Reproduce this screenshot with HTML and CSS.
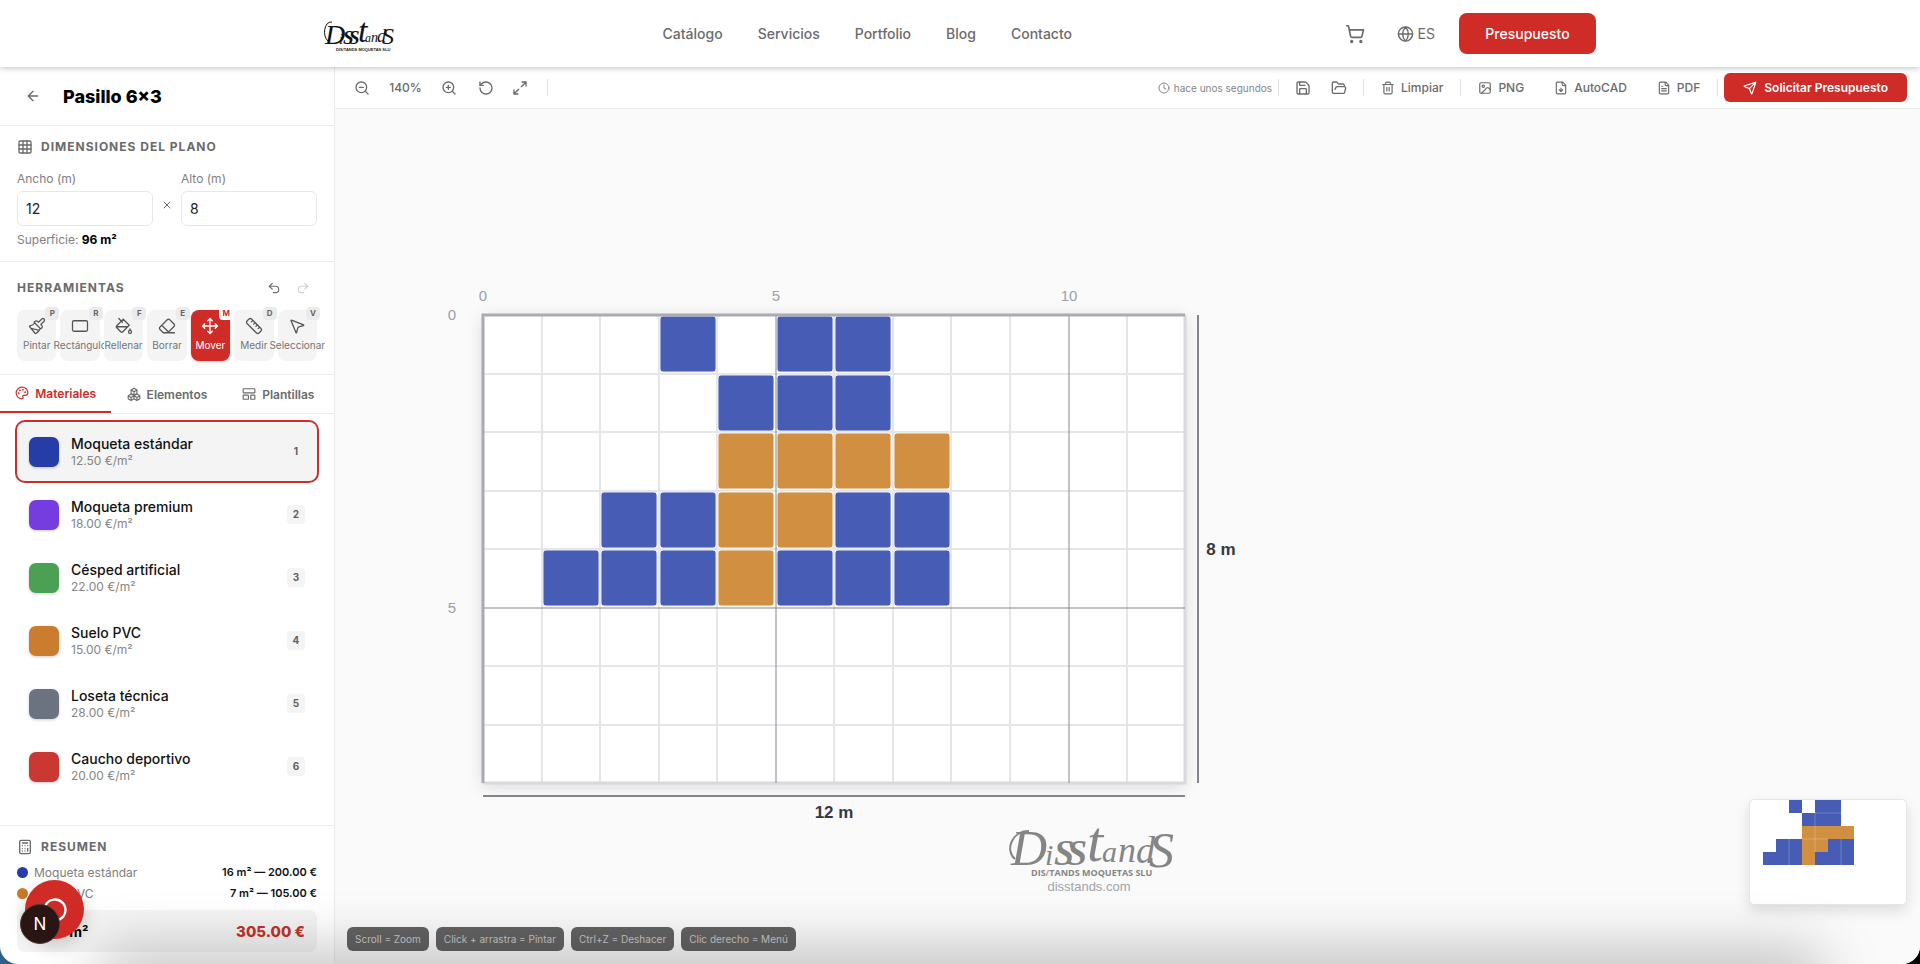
FILE: index.html
```html
<!DOCTYPE html>
<html lang="es">
<head>
    <meta charset="UTF-8">
    <title>Pasillo 6×3 - Disstands</title>
    <link rel="stylesheet" href="styles.css">
</head>
<body>
    <div class="window">
        <header class="header">
            <div class="header-inner">
                <a href="#" class="logo">
                    <svg width="66" height="40" viewBox="0 0 66 40">
                        <path d="M4 27C-2 22 0 7 8 8" fill="none" stroke="#111"/>
                        <text class="logo-text" y="31"><tspan x="1" y="30" font-size="28">D</tspan><tspan x="15" font-size="15">i</tspan><tspan x="19" font-size="19" font-weight="bold">S</tspan><tspan x="25" font-size="19" font-weight="bold">S</tspan><tspan x="34" y="28" font-size="34">t</tspan><tspan x="41" y="28" font-size="12">a</tspan><tspan x="47" y="28" font-size="14">n</tspan><tspan x="53" y="28" font-size="18">d</tspan><tspan x="58" y="30" font-size="24">S</tspan></text>
                        <text x="12" y="37" font-family="Liberation Sans" font-weight="bold" font-size="4" fill="#222">DIS<tspan fill="#d02c27">/</tspan>TANDS MOQUETAS SLU</text>
                    </svg>
                </a>
                <nav class="nav">
                    <a href="#">Catálogo</a>
                    <a href="#">Servicios</a>
                    <a href="#">Portfolio</a>
                    <a href="#">Blog</a>
                    <a href="#">Contacto</a>
                </nav>
                <div class="header-right">
                    <button class="plain" aria-label="Carrito"><svg class="i20" viewBox="0 0 24 24"><circle cx="8" cy="21" r="1"/><circle cx="19" cy="21" r="1"/><path d="M2.05 2.05h2l2.66 12.42a2 2 0 0 0 2 1.58h9.78a2 2 0 0 0 1.95-1.57l1.65-7.43H5.12"/></svg></button>
                    <button class="plain lang"><svg class="i18" viewBox="0 0 24 24"><circle cx="12" cy="12" r="10"/><path d="M12 2a14.5 14.5 0 0 0 0 20 14.5 14.5 0 0 0 0-20M2 12h20"/></svg>ES</button>
                    <button class="btn-quote">Presupuesto</button>
                </div>
            </div>
        </header>

        <div class="main">
            <aside class="sidebar">
                <div class="title-bar">
                    <a href="#" class="back" aria-label="Volver"><svg class="i16" viewBox="0 0 24 24"><path d="m12 19-7-7 7-7M19 12H5"/></svg></a>
                    <h1>Pasillo 6×3</h1>
                </div>

                <section class="panel dims">
                    <h2><svg class="i16" viewBox="0 0 24 24"><rect x="3" y="3" width="18" height="18" rx="2"/><path d="M3 9h18M3 15h18M9 3v18M15 3v18"/></svg>Dimensiones del plano</h2>
                    <div class="fields">
                        <div class="field">
                            <label for="ancho">Ancho (m)</label>
                            <input id="ancho" type="text" value="12">
                        </div>
                        <svg class="i12 times" viewBox="0 0 24 24"><path d="M18 6 6 18M6 6l12 12"/></svg>
                        <div class="field">
                            <label for="alto">Alto (m)</label>
                            <input id="alto" type="text" value="8">
                        </div>
                    </div>
                    <p class="surface">Superficie: <strong>96 m²</strong></p>
                </section>

                <section class="panel tools">
                    <div class="tools-head">
                        <h2>Herramientas</h2>
                        <div class="history">
                            <button class="plain" aria-label="Deshacer"><svg class="i14" viewBox="0 0 24 24"><path d="M9 14 4 9l5-5"/><path d="M4 9h10.5a5.5 5.5 0 0 1 0 11H11"/></svg></button>
                            <button class="plain" aria-label="Rehacer" disabled><svg class="i14" viewBox="0 0 24 24"><path d="m15 14 5-5-5-5"/><path d="M20 9H9.500a5.500 5.500 0 0 0 0 11H13"/></svg></button>
                        </div>
                    </div>
                    <div class="tool-grid">
                        <button class="tool"><svg class="i18" viewBox="0 0 24 24"><path d="m14.600 17.900-10.700-2.900M18.400 2.600a1 1 0 0 1 3 3l-4 4a.5.5 0 0 0 0 .7l.9.900a2.400 2.400 0 0 1 0 3.400l-.9.900a.5.5 0 0 1-.7 0L8.400 7.400a.5.5 0 0 1 0-.7l.9-.9a2.400 2.400 0 0 1 3.400 0l.9.900a.5.5 0 0 0 .7 0zM9 8c-1.800 2.700-4 3.500-6.600 4a.5.5 0 0 0-.3.800l7.300 8.900a1 1 0 0 0 1.200.2C12.800 20.300 16 16.800 16 15"/></svg>Pintar<kbd>P</kbd></button>
                        <button class="tool"><svg class="i18" viewBox="0 0 24 24"><rect x="2" y="5" width="20" height="14" rx="2"/></svg>Rectángulo<kbd>R</kbd></button>
                        <button class="tool"><svg class="i18" viewBox="0 0 24 24"><path d="m19 11-8-8-8.600 8.600a2 2 0 0 0 0 2.800l5.200 5.200c.8.800 2 .8 2.800 0L19 11ZM5 2l5 5M2 13h15M22 20a2 2 0 1 1-4 0c0-1.600 1.700-2.400 2-4 .3 1.600 2 2.400 2 4Z"/></svg>Rellenar<kbd>F</kbd></button>
                        <button class="tool"><svg class="i18" viewBox="0 0 24 24"><path d="m7 21-4.300-4.300c-1-1-1-2.500 0-3.400l9.600-9.600c1-1 2.500-1 3.400 0l5.600 5.600c1 1 1 2.500 0 3.400L13 21M22 21H7M5 11l9 9"/></svg>Borrar<kbd>E</kbd></button>
                        <button class="tool active"><svg class="i18" viewBox="0 0 24 24"><path d="M12 2v20M2 12h20M15 19l-3 3-3-3M19 9l3 3-3 3M5 9l-3 3 3 3M9 5l3-3 3 3"/></svg>Mover<kbd>M</kbd></button>
                        <button class="tool"><svg class="i18" viewBox="0 0 24 24"><path d="M21.300 15.300a2.400 2.400 0 0 1 0 3.400l-2.600 2.600a2.400 2.400 0 0 1-3.400 0L2.700 8.700a2.400 2.400 0 0 1 0-3.400l2.600-2.600a2.400 2.400 0 0 1 3.400 0ZM14.500 12.500l2-2M11.500 9.500l2-2M8.500 6.500l2-2M17.500 15.500l2-2"/></svg>Medir<kbd>D</kbd></button>
                        <button class="tool"><svg class="i18" viewBox="0 0 24 24"><path d="M4 4.700a.5.5 0 0 1 .7-.6l16 6.500a.5.500 0 0 1-.1.950l-6.100 1.580a2 2 0 0 0-1.400 1.400l-1.600 6.100a.5.500 0 0 1-.95.060z"/></svg>Seleccionar<kbd>V</kbd></button>
                    </div>
                </section>

                <div class="tabs">
                    <button class="tab active"><svg class="i16" viewBox="0 0 24 24"><path d="M12 22a1 1 0 0 1 0-20 10 9 0 0 1 10 9 5 5 0 0 1-5 5h-2.250a1.750 1.750 0 0 0-1.400 2.800l.3.400a1.750 1.750 0 0 1-1.400 2.800z"/><circle cx="13.500" cy="6.500" r=".6"/><circle cx="17.500" cy="10.500" r=".6"/><circle cx="6.500" cy="12.500" r=".6"/><circle cx="8.500" cy="7.500" r=".6"/></svg>Materiales</button>
                    <button class="tab"><svg class="i16" viewBox="0 0 24 24"><path d="M7 12l5 3v5l-5 3-5-3v-5zM17 12l5 3v5l-5 3-5-3v-5zM12 2l5 3v6l-5 3-5-3V5zM2 15l5 3 5-3 5 3 5-3M7 18v5M17 18v5M7 5l5 3 5-3M12 8v6"/></svg>Elementos</button>
                    <button class="tab"><svg class="i16" viewBox="0 0 24 24"><rect x="2" y="3" width="20" height="7" rx="1"/><rect x="2" y="14" width="9" height="7" rx="1"/><rect x="15" y="14" width="7" height="7" rx="1"/></svg>Plantillas</button>
                </div>

                <ul class="materials">
                    <li class="active"><i class="swatch blue"></i><div><b>Moqueta estándar</b><small>12.50 €/m²</small></div><kbd>1</kbd></li>
                    <li><i class="swatch purple"></i><div><b>Moqueta premium</b><small>18.00 €/m²</small></div><kbd>2</kbd></li>
                    <li><i class="swatch green"></i><div><b>Césped artificial</b><small>22.00 €/m²</small></div><kbd>3</kbd></li>
                    <li><i class="swatch orange"></i><div><b>Suelo PVC</b><small>15.00 €/m²</small></div><kbd>4</kbd></li>
                    <li><i class="swatch gray"></i><div><b>Loseta técnica</b><small>28.00 €/m²</small></div><kbd>5</kbd></li>
                    <li><i class="swatch red"></i><div><b>Caucho deportivo</b><small>20.00 €/m²</small></div><kbd>6</kbd></li>
                </ul>

                <section class="summary">
                    <h2><svg class="i16" viewBox="0 0 24 24"><rect x="4" y="2" width="16" height="20" rx="2"/><path d="M8 6h8M8 10h.01M12 10h.01M16 10h.01M8 14h.01M12 14h.01M8 18h.01M12 18h.01M16 14v4"/></svg>Resumen</h2>
                    <div class="line"><i class="dot blue"></i><span>Moqueta estándar</span><b>16 m² — 200.00 €</b></div>
                    <div class="line"><i class="dot orange"></i><span>Suelo PVC</span><b>7 m² — 105.00 €</b></div>
                    <div class="total"><b>23 m²</b><strong>305.00 €</strong></div>
                    <button class="chat" aria-label="Chat"><svg class="i28" viewBox="0 0 24 24"><path d="M7.900 20A9 9 0 1 0 4 16.100L2 22Z"/></svg></button>
                    <button class="dev">N</button>
                </section>
            </aside>

            <div class="work">
                <div class="toolbar">
                    <button class="plain" aria-label="Alejar"><svg class="i16" viewBox="0 0 24 24"><circle cx="11" cy="11" r="8"/><path d="m21 21-4.300-4.300M8 11h6"/></svg></button>
                    <span class="zoom">140%</span>
                    <button class="plain zoom-in" aria-label="Acercar"><svg class="i16" viewBox="0 0 24 24"><circle cx="11" cy="11" r="8"/><path d="m21 21-4.300-4.300M8 11h6M11 8v6"/></svg></button>
                    <button class="plain reset" aria-label="Restablecer"><svg class="i16" viewBox="0 0 24 24"><path d="M3 12a9 9 0 1 0 9-9 9.750 9.750 0 0 0-6.740 2.740L3 8"/><path d="M3 3v5h5"/></svg></button>
                    <button class="plain" aria-label="Ajustar"><svg class="i16" viewBox="0 0 24 24"><path d="M15 3h6v6M21 3l-7 7M3 21l7-7M9 21H3v-6"/></svg></button>
                    <i class="sep"></i>
                    <span class="saved"><svg class="i12" viewBox="0 0 24 24"><circle cx="12" cy="12" r="10"/><path d="M12 6v6l4 2"/></svg>hace unos segundos</span>
                    <i class="sep"></i>
                    <button class="action" aria-label="Guardar"><svg class="i16" viewBox="0 0 24 24"><path d="M15.200 3a2 2 0 0 1 1.400.6l3.800 3.800a2 2 0 0 1 .6 1.400V19a2 2 0 0 1-2 2H5a2 2 0 0 1-2-2V5a2 2 0 0 1 2-2zM17 21v-7a1 1 0 0 0-1-1H8a1 1 0 0 0-1 1v7M7 3v4a1 1 0 0 0 1 1h7"/></svg></button>
                    <button class="action" aria-label="Abrir"><svg class="i16" viewBox="0 0 24 24"><path d="m6 14 1.500-2.900A2 2 0 0 1 9.240 10H20a2 2 0 0 1 1.940 2.500l-1.540 6a2 2 0 0 1-1.950 1.500H4a2 2 0 0 1-2-2V5a2 2 0 0 1 2-2h3.900a2 2 0 0 1 1.690.9l.81 1.200a2 2 0 0 0 1.670.9H18a2 2 0 0 1 2 2v2"/></svg></button>
                    <i class="sep"></i>
                    <button class="action"><svg class="i14" viewBox="0 0 24 24"><path d="M3 6h18M19 6v14a2 2 0 0 1-2 2H7a2 2 0 0 1-2-2V6M8 6V4a2 2 0 0 1 2-2h4a2 2 0 0 1 2 2v2M10 11v6M14 11v6"/></svg>Limpiar</button>
                    <i class="sep"></i>
                    <button class="action"><svg class="i14" viewBox="0 0 24 24"><rect x="3" y="3" width="18" height="18" rx="2"/><circle cx="9" cy="9" r="2"/><path d="m21 15-3.100-3.100a2 2 0 0 0-2.800 0L6 21"/></svg>PNG</button>
                    <button class="action"><svg class="i14" viewBox="0 0 24 24"><path d="M15 2H6a2 2 0 0 0-2 2v16a2 2 0 0 0 2 2h12a2 2 0 0 0 2-2V7ZM14 2v4a2 2 0 0 0 2 2h4M12 18v-6M9 15l3 3 3-3"/></svg>AutoCAD</button>
                    <button class="action"><svg class="i14" viewBox="0 0 24 24"><path d="M15 2H6a2 2 0 0 0-2 2v16a2 2 0 0 0 2 2h12a2 2 0 0 0 2-2V7ZM14 2v4a2 2 0 0 0 2 2h4M10 9H8M16 13H8M16 17H8"/></svg>PDF</button>
                    <i class="sep"></i>
                    <button class="btn-send"><svg class="i14" viewBox="0 0 24 24"><path d="M14.500 21.700a.5.5 0 0 0 .9 0l6.500-19a.5.5 0 0 0-.6-.6l-19 6.500a.5.5 0 0 0 0 .9l7.900 3.200a2 2 0 0 1 1.100 1.100zM21.800 2.200l-10.900 10.900"/></svg>Solicitar Presupuesto</button>
                </div>

                <div class="canvas">
                    <svg class="plan" width="1000" height="800" viewBox="0 0 1000 800">
                        <defs>
                            <rect id="c" x="1" y="1" width="56" height="56" rx="3"/>
                            <path id="v" d="M0 0v468"/>
                            <path id="h" d="M0 0h702"/>
                        </defs>
                        <g transform="translate(148 206)">
                            <rect class="sheet" width="702" height="468"/>
                            <g class="grid-minor">
                                <use href="#v" x="59"/><use href="#v" x="117"/><use href="#v" x="176"/><use href="#v" x="234"/>
                                <use href="#v" x="351"/><use href="#v" x="410"/><use href="#v" x="468"/><use href="#v" x="527"/><use href="#v" x="644"/>
                                <use href="#h" y="59"/><use href="#h" y="117"/><use href="#h" y="176"/><use href="#h" y="234"/>
                                <use href="#h" y="351"/><use href="#h" y="410"/>
                                <path class="edge" d="M702 0v468H0"/>
                            </g>
                            <g class="fill-blue">
                                <use href="#c" x="176"/><use href="#c" x="293"/><use href="#c" x="351"/>
                                <use href="#c" x="234" y="59"/><use href="#c" x="293" y="59"/><use href="#c" x="351" y="59"/>
                                <use href="#c" x="117" y="176"/><use href="#c" x="176" y="176"/><use href="#c" x="351" y="176"/><use href="#c" x="410" y="176"/>
                                <use href="#c" x="59" y="234"/><use href="#c" x="117" y="234"/><use href="#c" x="176" y="234"/>
                                <use href="#c" x="293" y="234"/><use href="#c" x="351" y="234"/><use href="#c" x="410" y="234"/>
                            </g>
                            <g class="fill-orange">
                                <use href="#c" x="234" y="117"/><use href="#c" x="293" y="117"/><use href="#c" x="351" y="117"/><use href="#c" x="410" y="117"/>
                                <use href="#c" x="234" y="176"/><use href="#c" x="293" y="176"/>
                                <use href="#c" x="234" y="234"/>
                            </g>
                            <g class="grid-major">
                                <use href="#v" x="293"/><use href="#v" x="586"/><use href="#h" y="293"/>
                                <path class="edge" d="M0 468V0h702"/>
                            </g>
                            <path class="measure" d="M0 481h702M715 0v468"/>
                            <g class="axis">
                                <text x="0" y="-14">0</text><text x="293" y="-14">5</text><text x="586" y="-14">10</text>
                                <text x="-31" y="5">0</text><text x="-31" y="298">5</text>
                            </g>
                            <g class="size">
                                <text x="351" y="503">12 m</text><text x="738" y="240">8 m</text>
                            </g>
                            <g class="mark" transform="translate(526 510)">
                                <path d="M6 34C-4 26 2 6 20 6" fill="none" stroke="#858585" stroke-width="2"/>
                                <text y="40"><tspan x="2" font-size="50">D</tspan><tspan x="36" font-size="30">i</tspan><tspan x="45" font-size="36" font-weight="bold">S</tspan><tspan x="58" font-size="36" font-weight="bold">S</tspan><tspan x="78" y="36" font-size="58">t</tspan><tspan x="93" y="37" font-size="30">a</tspan><tspan x="109" y="37" font-size="36">n</tspan><tspan x="127" y="38" font-size="38">d</tspan><tspan x="140" y="42" font-size="50">S</tspan></text>
                                <text class="mark-sub" x="22" y="51">DIS<tspan fill="#d98c89">/</tspan>TANDS MOQUETAS SLU</text>
                                <text class="mark-url" x="80" y="66">disstands.com</text>
                            </g>
                        </g>
                    </svg>
                    <div class="hints">
                        <span>Scroll = Zoom</span>
                        <span>Click + arrastra = Pintar</span>
                        <span>Ctrl+Z = Deshacer</span>
                        <span>Clic derecho = Menú</span>
                    </div>
                    <div class="minimap">
                        <svg width="156" height="104" viewBox="0 0 12 8">
                            <path fill="#475cb5" d="M3 0h1v1H3zM5 0h2v2H4V1h1zM2 3h2v2H1V4h1zM6 3h2v2H5V4h1z"/>
                            <path fill="#d18f41" d="M4 2h4v1H6v1H5v1H4z"/>
                            <path fill="none" stroke="#fff" stroke-opacity=".3" stroke-width=".06" d="M5 1v3M3 3v2M7 3v2M5 1h2M4 3h2"/>
                        </svg>
                    </div>
                </div>
            </div>
        </div>
        <div class="shade"></div>
    </div>
</body>
</html>
```
FILE: styles.css
```css
* {
    margin: 0;
    padding: 0;
    box-sizing: border-box;
}
html, body {
    height: 100%;
}
body {
    background: linear-gradient(90deg, #2b6285, #000 30%);
    font-family: Inter, "Liberation Sans", sans-serif;
    font-size: 13px;
    color: #6b6b6b;
}
button, input, kbd {
    font-family: inherit;
    color: inherit;
}
button {
    border: 0;
    background: none;
    cursor: pointer;
}
a {
    color: inherit;
    text-decoration: none;
}
svg {
    display: block;
    flex: none;
}
.i12, .i14, .i16, .i18, .i20, .i28 {
    fill: none;
    stroke: currentColor;
    stroke-width: 2;
    stroke-linecap: round;
    stroke-linejoin: round;
}
.i12 { width: 12px; height: 12px; }
.i14 { width: 14px; height: 14px; }
.i16 { width: 16px; height: 16px; }
.i18 { width: 18px; height: 18px; }
.i20 { width: 20px; height: 20px; }
.i28 { width: 28px; height: 28px; }

.window {
    position: relative;
    display: flex;
    flex-direction: column;
    height: 100vh;
    min-height: 900px;
    background: #fff;
    border-radius: 0 0 18px 18px;
    overflow: hidden;
}
.shade {
    position: absolute;
    left: 110px;
    right: 110px;
    bottom: -30px;
    height: 30px;
    box-shadow: 0 0 60px 10px rgba(0, 0, 0, 0.28);
    pointer-events: none;
}

/* header */
.header {
    position: relative;
    z-index: 2;
    background: #fff;
    box-shadow: 0 1px 6px rgba(0, 0, 0, 0.25);
}
.header-inner {
    display: flex;
    justify-content: space-between;
    align-items: center;
    max-width: 1272px;
    height: 67px;
    margin: 0 auto;
}
.logo svg {
    overflow: visible;
}
.logo-text {
    font-family: "Liberation Serif", serif;
    font-style: italic;
    fill: #111;
}
.nav {
    display: flex;
    gap: 35px;
    font-size: 14px;
    font-weight: 500;
}
.header-right {
    display: flex;
    align-items: center;
}
.plain {
    display: flex;
    align-items: center;
}
.lang {
    gap: 4px;
    margin: 0 24px 0 32px;
    font-size: 14px;
}
.lang svg {
    width: 17px;
}
.btn-quote {
    width: 137px;
    height: 41px;
    border-radius: 8px;
    background: #d02c27;
    color: #fff;
    font-size: 14px;
    font-weight: 500;
}

.main {
    flex: 1;
    display: flex;
    min-height: 0;
}

/* sidebar */
.sidebar {
    display: flex;
    flex-direction: column;
    width: 335px;
    flex: none;
    border-right: 1px solid #ebebeb;
}
.title-bar {
    display: flex;
    align-items: center;
    gap: 22px;
    height: 59px;
    padding-left: 25px;
    border-bottom: 1px solid #ebebeb;
}
h1 {
    font-size: 18px;
    font-weight: 800;
    color: #000;
}
h2 {
    display: flex;
    align-items: center;
    gap: 8px;
    font-size: 12px;
    line-height: 16px;
    font-weight: 700;
    letter-spacing: 1px;
    text-transform: uppercase;
}
h2 svg {
    width: 14px;
    height: 16px;
}
.panel {
    padding: 0 17px;
    border-bottom: 1px solid #ebebeb;
}
.dims {
    height: 136px;
    padding-top: 13px;
}
.fields {
    display: flex;
    margin-top: 16px;
}
.field {
    flex: 1;
    min-width: 0;
    color: #808080;
    font-size: 12px;
}
.field label {
    display: block;
    line-height: 16px;
    margin-bottom: 4px;
}
.field input {
    width: 100%;
    height: 35px;
    padding-left: 8px;
    border: 1px solid #e8e8e8;
    border-radius: 6px;
    background: #fff;
    color: #222;
    font-size: 14px;
}
.times {
    margin: 28px 8px 0;
}
.surface {
    margin-top: 6px;
    font-size: 12px;
    line-height: 16px;
    color: #808080;
}
.surface strong {
    color: #000;
}
.tools {
    height: 113px;
    padding-top: 18px;
}
.tools-head {
    display: flex;
    justify-content: space-between;
    margin-bottom: 14px;
}
.history {
    display: flex;
    gap: 15px;
    padding-right: 7px;
}
.history button:disabled {
    color: #d0d0d0;
}
.tool-grid {
    display: grid;
    grid-template-columns: repeat(7, 1fr);
    gap: 4px;
}
.tool {
    position: relative;
    display: flex;
    flex-direction: column;
    align-items: center;
    gap: 3px;
    min-width: 0;
    height: 51px;
    padding-top: 7px;
    border-radius: 8px;
    background: #f4f4f4;
    font-size: 10px;
    line-height: 14px;
    white-space: nowrap;
    color: #757575;
}
.tool svg {
    color: #555;
    stroke-width: 1.7;
}
.tool kbd {
    position: absolute;
    top: -3px;
    right: -3px;
    min-width: 14px;
    border-radius: 4px;
    background: #ebebeb;
    font-size: 8px;
    line-height: 13px;
    font-weight: 700;
    color: #666;
}
.tool.active {
    background: #d02c27;
    box-shadow: 0 1px 3px rgba(0, 0, 0, 0.2);
    color: #fff;
}
.tool.active svg {
    color: #fff;
}
.tool.active kbd {
    background: #fff;
    color: #d02c27;
}
.tabs {
    display: flex;
    height: 39px;
    border-bottom: 1px solid #ebebeb;
}
.tab {
    flex: 1;
    display: flex;
    align-items: center;
    justify-content: center;
    gap: 6px;
    font-size: 12px;
    font-weight: 600;
}
.tab svg {
    width: 14px;
}
.tab.active {
    color: #d02c27;
    border-bottom: 2px solid #d02c27;
}
.materials {
    flex: 1;
    list-style: none;
    padding: 8px 17px 0;
}
.materials li {
    display: flex;
    align-items: center;
    gap: 12px;
    height: 59px;
    margin-bottom: 4px;
    padding: 0 12px;
    border-radius: 8px;
}
.materials li.active {
    background: #f4f4f4;
    box-shadow: 0 0 0 2px #c5302b;
}
.materials div {
    flex: 1;
}
.materials b {
    display: block;
    font-size: 14px;
    line-height: 18px;
    font-weight: 500;
    color: #111;
}
.materials small {
    display: block;
    font-size: 12px;
    line-height: 16px;
    color: #868686;
}
.materials kbd {
    width: 18px;
    border-radius: 4px;
    background: #f4f4f4;
    font-size: 10px;
    line-height: 19px;
    font-weight: 700;
    text-align: center;
    color: #606060;
}
.swatch {
    width: 30px;
    height: 30px;
    border-radius: 7px;
    box-shadow: 0 1px 3px rgba(0, 0, 0, 0.2);
}
.blue { background: #263da8; }
.purple { background: #753de0; }
.green { background: #4ba053; }
.orange { background: #ca7d2e; }
.gray { background: #6b7280; }
.red { background: #ca3832; }

.summary {
    position: relative;
    padding: 13px 17px 12px;
    border-top: 1px solid #ebebeb;
}
.summary h2 {
    margin-bottom: 7px;
}
.line {
    display: flex;
    align-items: center;
    gap: 6px;
    font-size: 12px;
    line-height: 21px;
    color: #808080;
}
.line span {
    flex: 1;
}
.line b {
    font-size: 11px;
    font-weight: 600;
    color: #111;
}
.dot {
    width: 11px;
    height: 11px;
    border-radius: 50%;
}
.total {
    display: flex;
    align-items: center;
    justify-content: space-between;
    height: 42px;
    margin-top: 6px;
    padding: 0 12px;
    border-radius: 8px;
    background: #f4f4f4;
    font-size: 14px;
    color: #000;
}
.total b {
    padding-left: 19px;
}
.total strong {
    font-size: 15px;
    font-weight: 800;
    color: #c5302b;
}
/* floating buttons over the summary */
.chat {
    position: absolute;
    left: 25px;
    bottom: 25px;
    display: flex;
    align-items: center;
    justify-content: center;
    width: 59px;
    height: 59px;
    border-radius: 50%;
    background: #d02c27;
    box-shadow: 0 6px 18px rgba(0, 0, 0, 0.2);
    color: #fff;
}
.dev {
    position: absolute;
    left: 20px;
    bottom: 20px;
    width: 40px;
    height: 40px;
    border: 1px solid #4a3a3a;
    border-radius: 50%;
    background: #2a1414;
    font-size: 17px;
    color: #fff;
}

/* toolbar */
.work {
    flex: 1;
    display: flex;
    flex-direction: column;
    min-width: 0;
}
.toolbar {
    display: flex;
    align-items: center;
    height: 42px;
    padding: 0 13px 0 19px;
    border-bottom: 1px solid #ebebeb;
    font-size: 12px;
    font-weight: 500;
}
.zoom {
    width: 71px;
    text-align: center;
}
.reset {
    margin: 0 18px 0 21px;
}
.sep {
    width: 1px;
    height: 17px;
    margin: 0 6px;
    background: #e2e2e2;
}
.toolbar > .plain + .sep {
    margin-left: 19px;
}
.saved {
    display: flex;
    align-items: center;
    gap: 4px;
    margin-left: auto;
    font-size: 10px;
    font-weight: 400;
    color: #858585;
}
.action {
    display: flex;
    align-items: center;
    gap: 6px;
    padding: 0 11px;
    font-size: 12px;
    font-weight: 500;
}
.action + .action {
    margin-left: 8px;
}
.action[aria-label] {
    margin: 0;
    padding: 0 10px;
}
.btn-send {
    display: flex;
    align-items: center;
    gap: 7px;
    height: 29px;
    padding: 0 19px;
    border-radius: 6px;
    background: #d02c27;
    color: #fff;
    font-size: 12px;
    font-weight: 600;
}

/* floor plan */
.canvas {
    position: relative;
    flex: 1;
    background: #fafafa;
    overflow: hidden;
}
.plan {
    position: absolute;
    left: 0;
    top: 0;
}
.sheet {
    fill: #fff;
    filter: drop-shadow(0 3px 8px rgba(0, 0, 0, 0.14));
}
.grid-minor {
    fill: none;
    stroke: #e5e6ea;
    stroke-width: 2;
}
.grid-minor .edge {
    stroke: #d9dade;
    stroke-width: 3;
}
.grid-major {
    fill: none;
    stroke: #85868f;
    stroke-width: 1;
}
.grid-major .edge {
    stroke: #a9aab2;
    stroke-width: 3;
}
.fill-blue { fill: #475cb5; stroke: #e9ecf6; }
.fill-orange { fill: #d18f41; stroke: #faf2e8; }
.measure {
    stroke: #85868c;
    stroke-width: 2;
}
.axis, .size {
    font-family: "Liberation Sans", sans-serif;
    font-size: 15px;
    fill: #9ca0a8;
    text-anchor: middle;
}
.size {
    font-size: 17px;
    font-weight: 700;
    fill: #353942;
}
.mark {
    font-family: "Liberation Serif", serif;
    font-style: italic;
    fill: #858585;
}
.mark-sub {
    font: bold 9px "Open Sans", sans-serif;
}
.mark-url {
    font: 13px "Liberation Sans", sans-serif;
    fill: #a0a3ab;
    text-anchor: middle;
}
.hints {
    position: absolute;
    left: 12px;
    bottom: 13px;
    display: flex;
    gap: 7px;
}
.hints span {
    padding: 0 8px;
    border-radius: 6px;
    background: #636363;
    color: #c6c6c6;
    font-size: 10px;
    line-height: 24px;
}
.minimap {
    position: absolute;
    right: 13px;
    bottom: 59px;
    border: 1px solid #e6e6e6;
    border-radius: 5px;
    background: #fff;
    box-shadow: 0 6px 14px rgba(0, 0, 0, 0.12);
    overflow: hidden;
}
```
